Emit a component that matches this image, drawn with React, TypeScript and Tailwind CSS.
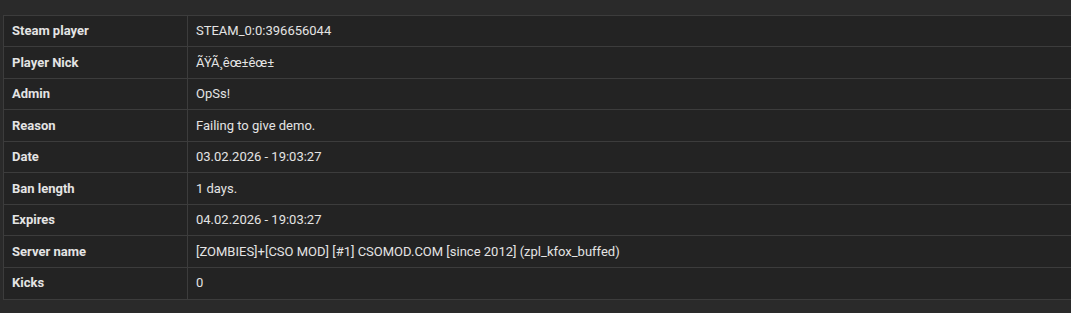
import React from "react";

const rows: [string, string][] = [
  ["Steam player", "STEAM_0:0:396656044"],
  ["Player Nick", "ÃŸÃ¸ê­œ±ê­œ±"],
  ["Admin", "OpSs!"],
  ["Reason", "Failing to give demo."],
  ["Date", "03.02.2026 - 19:03:27"],
  ["Ban length", "1 days."],
  ["Expires", "04.02.2026 - 19:03:27"],
  ["Server name", "[ZOMBIES]+[CSO MOD] [#1] CSOMOD.COM [since 2012] (zpl_kfox_buffed)"],
  ["Kicks", "0"],
];

export default function App() {
  return (
    <div
      className="w-[1071px] h-[313px] overflow-hidden bg-[#2a2a2a] pt-[15px] pl-[3px]"
      style={{ fontFamily: "Roboto, 'Liberation Sans', sans-serif" }}
    >
      <div className="w-[1100px] border border-[#3c3c3c] bg-[#232323] grid grid-cols-[184px_1fr]">
        {rows.map(([k, v], i) => (
          <React.Fragment key={k}>
            <div
              className={`h-[31.44px] flex items-center px-2 text-[13px] font-bold text-[#e4e4e4] border-r border-[#3c3c3c] ${
                i < rows.length - 1 ? "border-b" : ""
              }`}
            >
              {k}
            </div>
            <div
              className={`h-[31.44px] flex items-center px-2 text-[13px] text-[#e4e4e4] border-[#3c3c3c] ${
                i < rows.length - 1 ? "border-b" : ""
              }`}
            >
              {v}
            </div>
          </React.Fragment>
        ))}
      </div>
    </div>
  );
}
